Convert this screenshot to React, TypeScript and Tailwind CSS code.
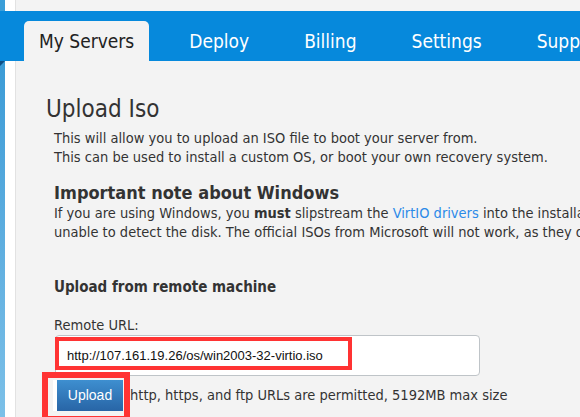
import React from "react";

const sans = '"DejaVu Sans Condensed", "DejaVu Sans", sans-serif';
const arial = '"Liberation Sans", Arial, sans-serif';

function LeftStrip({ top }: { top?: boolean }) {
  return (
    <div className="flex shrink-0">
      <div className={`relative w-[5px] ${top ? "bg-[#3b9ed8]" : "bg-gradient-to-b from-[#3a9bd6] to-[#7cc0e8]"}`}>
        {!top && (
          <div className="absolute left-0 top-0 w-0 h-0 border-t-[5px] border-t-[#0d4f86] border-r-[5px] border-r-transparent" />
        )}
      </div>
      <div className="w-[10px] bg-white" />
      <div className="w-px bg-[#e2e2e2]" />
    </div>
  );
}

export default function App() {
  const tabs = ["Deploy", "Billing", "Settings", "Support"];
  return (
    <div
      className="w-[580px] h-[417px] overflow-hidden bg-[#f3f3f3] text-[#333] flex flex-col"
      style={{ fontFamily: sans }}
    >
      <div className="h-[11px] flex shrink-0">
        <LeftStrip top />
        <div className="flex-1" />
      </div>
      <div className="h-[50px] bg-[#0689dc] flex items-end pl-[24px] gap-[25px] shrink-0 whitespace-nowrap overflow-hidden">
        <div className="h-[40px] px-[15px] shrink-0 bg-[#f3f3f3] rounded-t-[5px] flex items-center text-[19px] text-[#222]">
          My Servers
        </div>
        {tabs.map((t) => (
          <div key={t} className="h-[40px] px-[15px] shrink-0 flex items-center text-[19px] text-white">
            {t}
          </div>
        ))}
      </div>
      <div className="flex flex-1 min-h-0">
        <LeftStrip />
        <div className="flex-1 pl-[30px] pt-[34px] whitespace-nowrap">
          <h1 className="text-[24px] leading-[28px] font-normal text-[#333]">Upload Iso</h1>
          <div className="pl-[8px]">
            <p className="text-[14.5px] leading-[19px] mt-[6px]">
              This will allow you to upload an ISO file to boot your server from.
              <br />
              This can be used to install a custom OS, or boot your own recovery system.
            </p>
            <h2 className="text-[18px] leading-[22px] font-bold mt-[15px] text-[#333]">
              Important note about Windows
            </h2>
            <p className="text-[14.5px] leading-[19px]">
              If you are using Windows, you <b>must</b> slipstream the{" "}
              <a className="text-[#2b8ae8]">VirtIO drivers</a> into the installation media, or the installer will be
              <br />
              unable to detect the disk. The official ISOs from Microsoft will not work, as they do not include these drivers.
            </p>
            <h3 className="text-[15px] leading-[20px] font-bold mt-[35px]">Upload from remote machine</h3>
            <div className="text-[14.5px] leading-[17px] mt-[20px]">Remote URL:</div>
            <div className="relative w-[425px] h-[41px] mt-[1px] ml-[1px] bg-white border border-[#bfc4c8] rounded-[4px] flex items-center">
              <span className="pl-[11px] text-[13px] text-[#111]" style={{ fontFamily: arial }}>
                http://107.161.19.26/os/win2003-32-virtio.iso
              </span>
              <div className="absolute left-[-1px] top-[1px] w-[297px] h-[33px] border-[4px] border-[#ff3333]" />
            </div>
            <div className="flex items-center mt-[4px] ml-[-1px]">
              <div className="relative">
                <button
                  className="h-[31px] w-[70px] bg-gradient-to-b from-[#3e8fd0] to-[#2865a6] text-white text-[14px] border-l-[4px] border-white"
                  style={{ fontFamily: arial }}
                >
                  Upload
                </button>
                <div className="absolute left-[-11px] top-[-8px] w-[88px] h-[50px] border-[6px] border-[#ff3333]" />
              </div>
              <span className="ml-[7px] text-[14.5px]">http, https, and ftp URLs are permitted, 5192MB max size</span>
            </div>
          </div>
        </div>
      </div>
    </div>
  );
}
